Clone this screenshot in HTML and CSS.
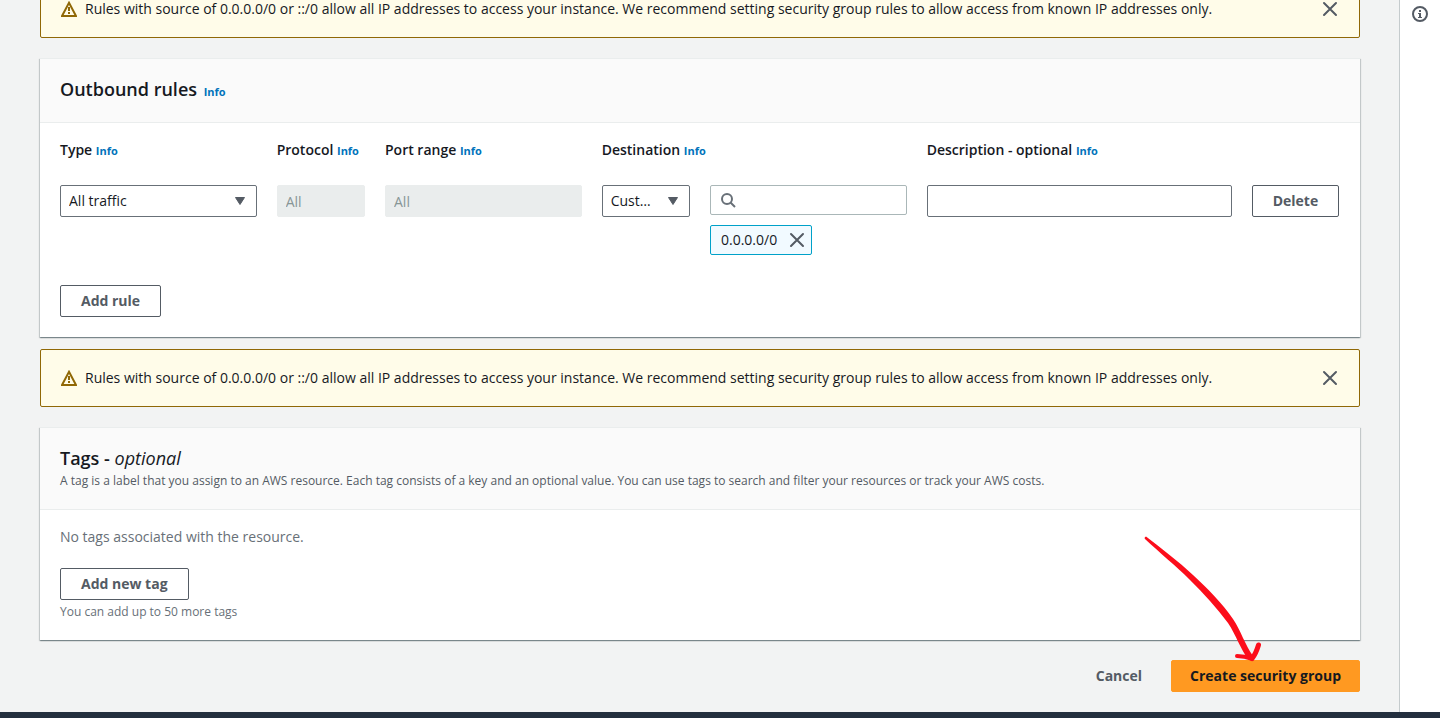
FILE: index.html
```html
<!DOCTYPE html>
<html lang="en">
<head>
<meta charset="utf-8">
<meta name="viewport" content="width=device-width, initial-scale=1">
<title>Create security group</title>
<link rel="stylesheet" href="styles.css">
</head>
<body>
<svg class="sprite" aria-hidden="true">
  <symbol id="i-warning" viewBox="0 0 16 16"><path d="M8 1.8 15 15H1z" fill="none" stroke="currentColor" stroke-width="2"/><path d="M8 6v4M8 11v2" fill="none" stroke="currentColor" stroke-width="2"/></symbol>
  <symbol id="i-close" viewBox="0 0 16 16"><path d="m2 2 12 12M14 2 2 14" fill="none" stroke="currentColor" stroke-width="2" stroke-linecap="round"/></symbol>
  <symbol id="i-caret" viewBox="0 0 16 16"><path d="M3.5 4.500h9L8 11.500z" fill="currentColor" stroke="currentColor" stroke-linejoin="round"/></symbol>
  <symbol id="i-search" viewBox="0 0 16 16"><circle cx="7" cy="7" r="5" fill="none" stroke="currentColor" stroke-width="2"/><path d="m10.500 10.500 4.500 4.500" fill="none" stroke="currentColor" stroke-width="2"/></symbol>
  <symbol id="i-info" viewBox="0 0 16 16"><circle cx="8" cy="8" r="7" fill="none" stroke="currentColor" stroke-width="2"/><path d="M7 4h2v2H7zM6 7h3v4h1v1H6v-1h1V8H6z" fill="currentColor"/></symbol>
</svg>
<div class="shell">
  <main class="main">
    <div class="scrolled">
      <div class="alert" role="status">
        <svg class="icon"><use href="#i-warning"/></svg>
        <p class="alert-text">Rules with source of 0.0.0.0/0 or ::/0 allow all IP addresses to access your instance. We recommend setting security group rules to allow access from known IP addresses only.</p>
        <button class="icon-button" type="button" aria-label="Dismiss"><svg class="icon"><use href="#i-close"/></svg></button>
      </div>

      <section class="card card-rules">
        <header class="card-header">
          <h2 class="card-title">Outbound rules <a class="info" href="#">Info</a></h2>
        </header>
        <div class="card-body">
          <div class="rules">
            <div class="span-2 label"><label for="type">Type</label> <a class="info" href="#">Info</a></div>
            <div class="label"><label for="protocol">Protocol</label> <a class="info" href="#">Info</a></div>
            <div class="span-2 label"><label for="ports">Port range</label> <a class="info" href="#">Info</a></div>
            <div class="span-3 label"><label for="destination">Destination</label> <a class="info" href="#">Info</a></div>
            <div class="span-4 label"><label for="description">Description - optional</label> <a class="info" href="#">Info</a></div>

            <div class="span-2 select"><select class="field" id="type"><option>All traffic</option></select><svg class="icon"><use href="#i-caret"/></svg></div>
            <input class="field" id="protocol" value="All" disabled>
            <input class="field span-2" id="ports" value="All" disabled>
            <div class="select"><select class="field" id="destination"><option>Custom</option></select><svg class="icon"><use href="#i-caret"/></svg></div>
            <div class="span-2 sources">
              <div class="search"><svg class="icon"><use href="#i-search"/></svg><input class="field" type="search" aria-label="Destination search"></div>
              <span class="token">0.0.0.0/0 <button class="icon-button" type="button" aria-label="Remove 0.0.0.0/0"><svg class="icon"><use href="#i-close"/></svg></button></span>
            </div>
            <input class="field span-3" id="description">
            <button class="button" type="button">Delete</button>
          </div>
          <button class="button" type="button">Add rule</button>
        </div>
      </section>

      <div class="alert" role="status">
        <svg class="icon"><use href="#i-warning"/></svg>
        <p class="alert-text">Rules with source of 0.0.0.0/0 or ::/0 allow all IP addresses to access your instance. We recommend setting security group rules to allow access from known IP addresses only.</p>
        <button class="icon-button" type="button" aria-label="Dismiss"><svg class="icon"><use href="#i-close"/></svg></button>
      </div>

      <section class="card">
        <header class="card-header">
          <h2 class="card-title">Tags - <em>optional</em></h2>
          <p class="card-note">A tag is a label that you assign to an AWS resource. Each tag consists of a key and an optional value. You can use tags to search and filter your resources or track your AWS costs.</p>
        </header>
        <div class="card-body">
          <p class="empty">No tags associated with the resource.</p>
          <button class="button" type="button">Add new tag</button>
          <p class="hint">You can add up to 50 more tags</p>
        </div>
      </section>

      <div class="actions">
        <button class="button button-link" type="button">Cancel</button>
        <div class="primary">
          <button class="button button-primary" type="button">Create security group</button>
          <svg class="arrow" viewBox="0 0 124 132" aria-hidden="true">
            <path d="M6 4.500C5 5 4 6 5 7C20 21 36 34 49 47C64 62 77 76 88 91C96 103 101 118 108 127L113 124C105 113 101 99 93 87C82 71 68 57 53 43C38 29 22 17 6 4.500z"/>
            <path class="arrow-head" d="M97 124C102 124 107 125 112 127"/>
            <path class="arrow-head arrow-tip" d="M112 126.500C115 123 117 118 118.500 113"/>
          </svg>
        </div>
      </div>
    </div>
  </main>
  <aside class="rail"><button class="icon-button" type="button" aria-label="Open help panel"><svg class="icon"><use href="#i-info"/></svg></button></aside>
</div>
<footer class="footer"></footer>
</body>
</html>
```
FILE: styles.css
```css
* { box-sizing: border-box; }
body {
  margin: 0;
  min-height: 100vh;
  display: flex;
  flex-direction: column;
  background: #f2f3f3;
  color: #16191f;
  font: 14px/20px "Open Sans", "Noto Sans", sans-serif;
}
h2, p { margin: 0; }
button, input, select { font: inherit; color: inherit; }
.sprite { display: none; }
.icon { display: block; flex: none; width: 16px; height: 16px; color: #545b64; }
.icon-button { padding: 0; border: 0; background: none; }

.shell { flex: 1; display: flex; }
.main { flex: 1; min-width: 0; overflow: hidden; padding: 0 39px 20px 40px; }
.scrolled { margin-top: -20px; }
.rail { width: 41px; padding: 6px 12px; border-left: 1px solid #c5cbcd; background: #fff; }
.footer { flex: none; height: 6px; background: #232f3e; }

.alert {
  display: flex;
  align-items: center;
  gap: 8px;
  padding: 18px 21px 18px 20px;
  border: 1px solid #906806;
  border-radius: 2px;
  background: #fffce9;
}
.alert > .icon { color: #906806; }
.alert-text { flex: 1; }

.card {
  margin: 20px 0;
  border-top: 1px solid #eaeded;
  background: #fff;
  box-shadow: 0 1px 1px rgba(0, 28, 36, .3), 1px 1px 1px rgba(0, 28, 36, .15), -1px 1px 1px rgba(0, 28, 36, .15);
}
.card-rules { margin-bottom: 12px; }
.card-header { padding: 18px 20px 20px; border-bottom: 1px solid #eaeded; background: #fafafa; }
.card-title { font-size: 18px; line-height: 25px; font-weight: 600; }
.card-title em { font-weight: 400; }
.card-note { margin-top: 2px; font-size: 12px; line-height: 16px; color: #545b64; }
.card-body { padding: 17px 20px 20px; }
.info { color: #0073bb; font-size: 11px; line-height: 1; font-weight: 700; text-decoration: none; }
.card-title .info { margin-left: 2px; }
.rules {
  display: grid;
  grid-template-columns: repeat(12, minmax(0, 1fr));
  column-gap: 20px;
  row-gap: 25px;
  align-items: start;
  margin-bottom: 30px;
}
.label { font-weight: 600; white-space: nowrap; }
.span-2 { grid-column: span 2; }
.span-3 { grid-column: span 3; }
.span-4 { grid-column: span 4; }

.field {
  display: block;
  width: 100%;
  height: 32px;
  padding: 0 8px;
  border: 1px solid #687078;
  border-radius: 2px;
  background: #fff;
  appearance: none;
}
.field:disabled { border-color: #eaeded; background: #eaeded; color: #879596; }
.select, .search { position: relative; }
.select .field { padding-right: 34px; text-overflow: ellipsis; }
.select .icon { position: absolute; right: 9px; top: 8px; }
.search .field { height: 30px; padding-left: 34px; border-color: #aab7b8; }
.search .icon { position: absolute; left: 10px; top: 7px; color: #687078; }
.sources { display: grid; gap: 10px; justify-items: start; }
.search { width: 100%; }
.token {
  display: flex;
  align-items: center;
  gap: 12px;
  height: 30px;
  padding: 0 6px 0 10px;
  border: 1px solid #00a1c9;
  border-radius: 2px;
  background: #f1faff;
}

.button {
  height: 32px;
  padding: 0 20px;
  border: 1px solid #545b64;
  border-radius: 2px;
  background: #fff;
  color: #545b64;
  font-weight: 700;
  white-space: nowrap;
}
.rules .button { justify-self: start; }
.button-link { border-color: transparent; background: none; }
.button-primary { padding: 0 18px; border-color: #ff9921; background: #ff9921; color: #16191f; }
.empty { color: #687078; margin-bottom: 21px; }
.hint { margin-top: 4px; color: #687078; font-size: 12px; line-height: 16px; }
.actions { display: flex; justify-content: flex-end; gap: 8px; }
.primary { position: relative; }
.arrow { position: absolute; right: 96px; bottom: 28px; width: 124px; height: 132px; fill: #fc0d1b; pointer-events: none; }
.arrow-head { fill: none; stroke: #fc0d1b; stroke-width: 4; stroke-linecap: round; stroke-linejoin: round; }
.arrow-tip { stroke-width: 5; }
```
